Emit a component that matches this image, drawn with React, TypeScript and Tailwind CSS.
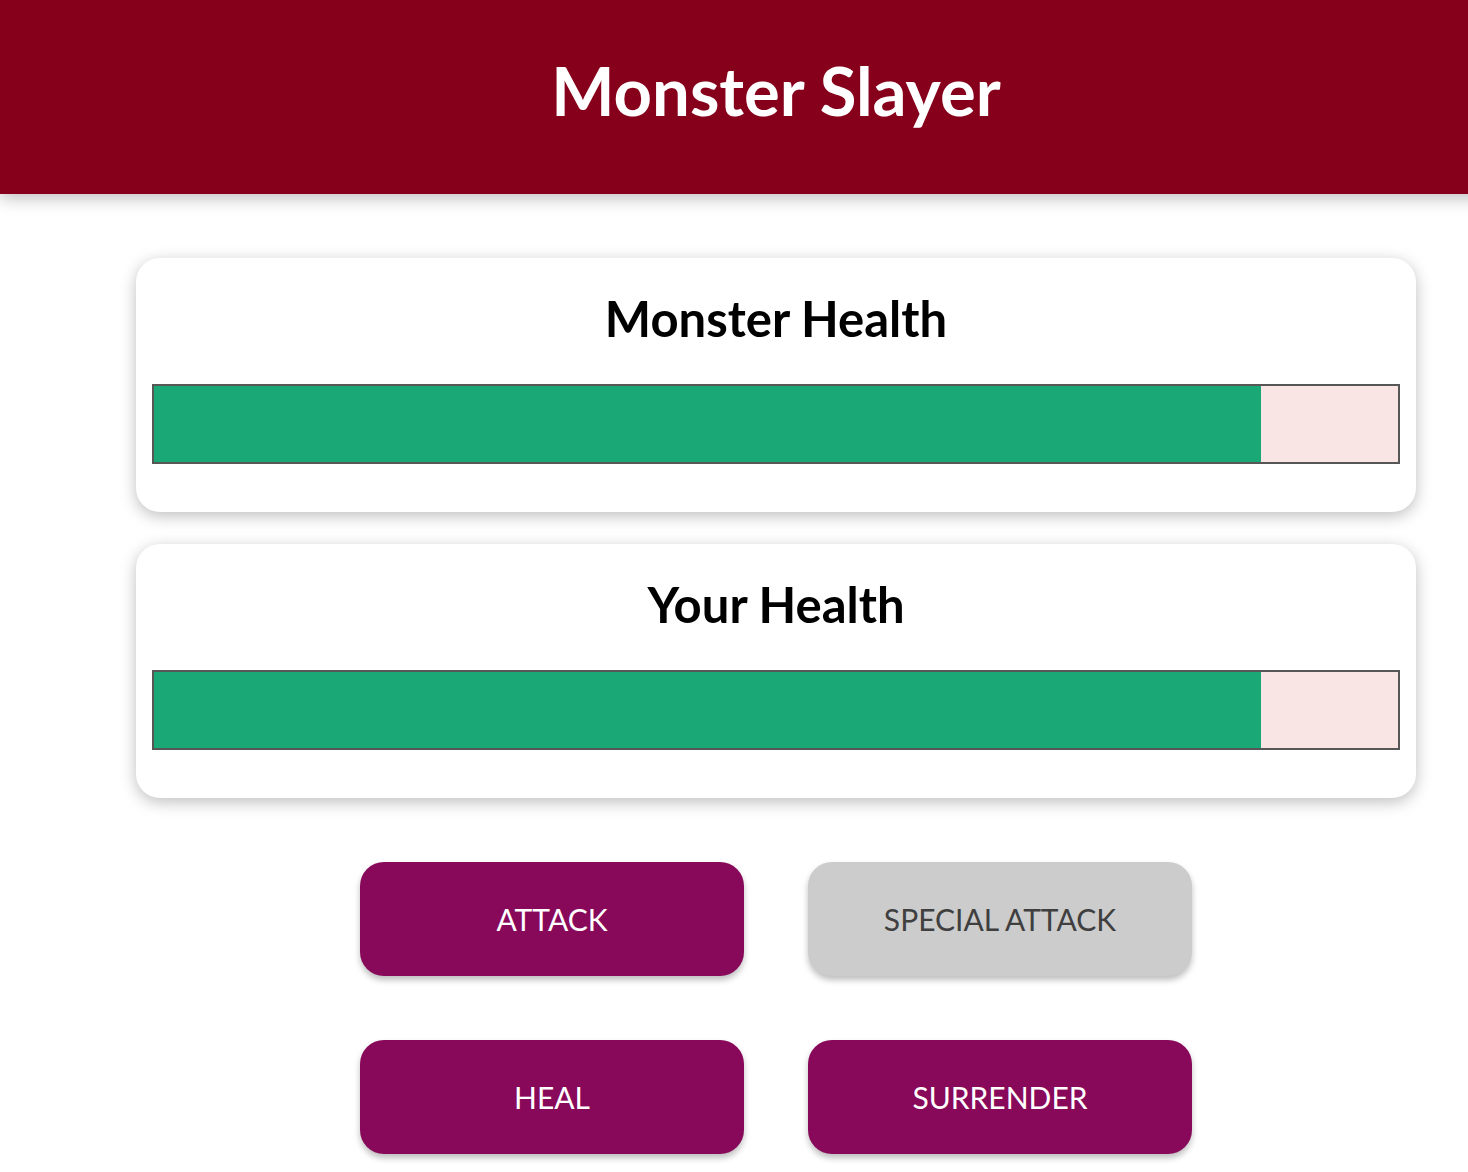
const HealthCard = ({ title, value }: { title: string; value: number }) => {
  return (
    <section className="mx-auto w-[1280px] rounded-[24px] bg-white px-4 pt-[30px] pb-4 text-center shadow-[0_4px_16px_rgba(0,0,0,0.26)]">
      <h2 className="text-[49px] font-bold leading-[60px] text-black">{title}</h2>
      <div className="mt-[36px] mb-[32px] h-[80px] w-full border-2 border-[#575757] bg-[#fae5e5]">
        <div className="h-full bg-[#1aa877]" style={{ width: `${value}%` }} />
      </div>
    </section>
  );
};

const GameButton = ({
  label,
  disabled = false,
}: {
  label: string;
  disabled?: boolean;
}) => {
  return (
    <button
      disabled={disabled}
      className={
        disabled
          ? "h-[114px] w-[384px] rounded-[24px] bg-[#cccccc] text-[30px] uppercase text-[#3f3f3f] shadow-[0_4px_6px_rgba(0,0,0,0.26)]"
          : "h-[114px] w-[384px] rounded-[24px] bg-[#88085a] text-[30px] uppercase text-white shadow-[0_4px_6px_rgba(0,0,0,0.26)]"
      }
    >
      {label}
    </button>
  );
};

export default function App() {
  return (
    <div className="min-h-screen w-full overflow-hidden bg-white font-['Lato','Open_Sans',sans-serif]">
      <div className="w-[1552px]">
        <header className="flex h-[194px] items-center justify-center bg-[#86001b] pb-[14px] shadow-[0_4px_16px_rgba(0,0,0,0.26)]">
          <h1 className="text-[67px] font-bold leading-none text-white">Monster Slayer</h1>
        </header>

        <div className="mt-[64px] flex flex-col gap-[32px]">
          <HealthCard title="Monster Health" value={89} />
          <HealthCard title="Your Health" value={89} />
        </div>

        <div className="mt-[64px] flex flex-col gap-[64px]">
          <div className="flex justify-center gap-[64px]">
            <GameButton label="Attack" />
            <GameButton label="Special Attack" disabled />
          </div>
          <div className="flex justify-center gap-[64px]">
            <GameButton label="Heal" />
            <GameButton label="Surrender" />
          </div>
        </div>
      </div>
    </div>
  );
}
